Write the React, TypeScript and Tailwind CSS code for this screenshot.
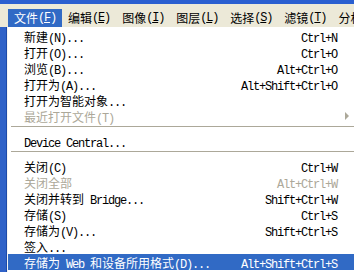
import React from 'react'

type Item =
  | { kind: 'sep' }
  | { kind: 'item'; label: string; shortcut?: string; disabled?: boolean; submenu?: boolean; active?: boolean }

const menuBar: { name: string; key: string }[] = [
  { name: '文件', key: 'F' },
  { name: '编辑', key: 'E' },
  { name: '图像', key: 'I' },
  { name: '图层', key: 'L' },
  { name: '选择', key: 'S' },
  { name: '滤镜', key: 'T' },
  { name: '分析', key: 'A' },
]

const items: Item[] = [
  { kind: 'item', label: '新建(N)...', shortcut: 'Ctrl+N' },
  { kind: 'item', label: '打开(O)...', shortcut: 'Ctrl+O' },
  { kind: 'item', label: '浏览(B)...', shortcut: 'Alt+Ctrl+O' },
  { kind: 'item', label: '打开为(A)...', shortcut: 'Alt+Shift+Ctrl+O' },
  { kind: 'item', label: '打开为智能对象...' },
  { kind: 'item', label: '最近打开文件(T)', disabled: true, submenu: true },
  { kind: 'sep' },
  { kind: 'item', label: 'Device Central...' },
  { kind: 'sep' },
  { kind: 'item', label: '关闭(C)', shortcut: 'Ctrl+W' },
  { kind: 'item', label: '关闭全部', shortcut: 'Alt+Ctrl+W', disabled: true },
  { kind: 'item', label: '关闭并转到 Bridge...', shortcut: 'Shift+Ctrl+W' },
  { kind: 'item', label: '存储(S)', shortcut: 'Ctrl+S' },
  { kind: 'item', label: '存储为(V)...', shortcut: 'Shift+Ctrl+S' },
  { kind: 'item', label: '签入...' },
  { kind: 'item', label: '存储为 Web 和设备所用格式(D)...', shortcut: 'Alt+Shift+Ctrl+S', active: true },
]

// SimSun-ish: half-width latin runs in a narrowed mono, CJK runs in Noto
function Mixed({ text }: { text: string }) {
  const runs = text.match(/[\x00-\x7f]+|[^\x00-\x7f]+/g) ?? []
  return (
    <>
      {runs.map((r, i) =>
        /^[\x00-\x7f]/.test(r) ? (
          <span key={i} className="font-['Liberation_Mono',monospace] text-[12px] tracking-[-1.2px] whitespace-pre">
            {r}
          </span>
        ) : (
          <span key={i} className="font-['Noto_Sans_CJK_SC',sans-serif] text-[12px]">
            {r}
          </span>
        )
      )}
    </>
  )
}

export default function App() {
  return (
    <div className="w-[354px] h-[272px] overflow-hidden bg-[#2f62c8] flex flex-col leading-none">
      {/* title bar remnant */}
      <div className="h-[4px] bg-[#2a5fd0] shrink-0" />

      {/* menu bar */}
      <div className="h-[23px] bg-[#ece9d8] flex items-end pl-[8px] shrink-0 text-black overflow-hidden">
        {menuBar.map((m, i) => (
          <div
            key={m.name}
            className={`h-[18px] px-[6px] flex items-center shrink-0 ${i === 0 ? 'bg-[#316ac5] text-white' : ''}`}
          >
            <span className="font-['Noto_Sans_CJK_SC',sans-serif] text-[12px]">{m.name}</span>
            <span className="font-['Liberation_Mono',monospace] text-[12px] tracking-[-1.2px]">
              (<span className="underline underline-offset-1">{m.key}</span>)
            </span>
          </div>
        ))}
      </div>

      {/* dropdown */}
      <div className="flex-1 flex">
        <div className="w-[7px] bg-[#2f62c8] border-r border-[#1d4aa8] shrink-0" />
        <div className="flex-1 bg-white border-l border-[#f4f4f4] pt-[1px] flex flex-col">
          {items.map((it, i) =>
            it.kind === 'sep' ? (
              <div key={i} className="h-[9px] pl-[3px] pt-[2px] shrink-0">
                <div className="h-px bg-[#aca899]" />
              </div>
            ) : (
              <div
                key={i}
                className={`h-[16px] shrink-0 flex items-center pl-[16px] ${
                  it.active ? 'bg-[#316ac5] text-white' : it.disabled ? 'text-[#aca899]' : 'text-black'
                }`}
              >
                <div className="flex-1 whitespace-nowrap">
                  <Mixed text={it.label} />
                </div>
                {it.shortcut && (
                  <div className="whitespace-nowrap">
                    <Mixed text={it.shortcut} />
                  </div>
                )}
                <div className="w-[17px] h-full flex items-center justify-center shrink-0">
                  {it.submenu && (
                    <span className="w-0 h-0 border-y-[4px] border-y-transparent border-l-[4px] border-l-[#aca899] ml-[2px]" />
                  )}
                </div>
              </div>
            )
          )}
        </div>
      </div>
    </div>
  )
}
